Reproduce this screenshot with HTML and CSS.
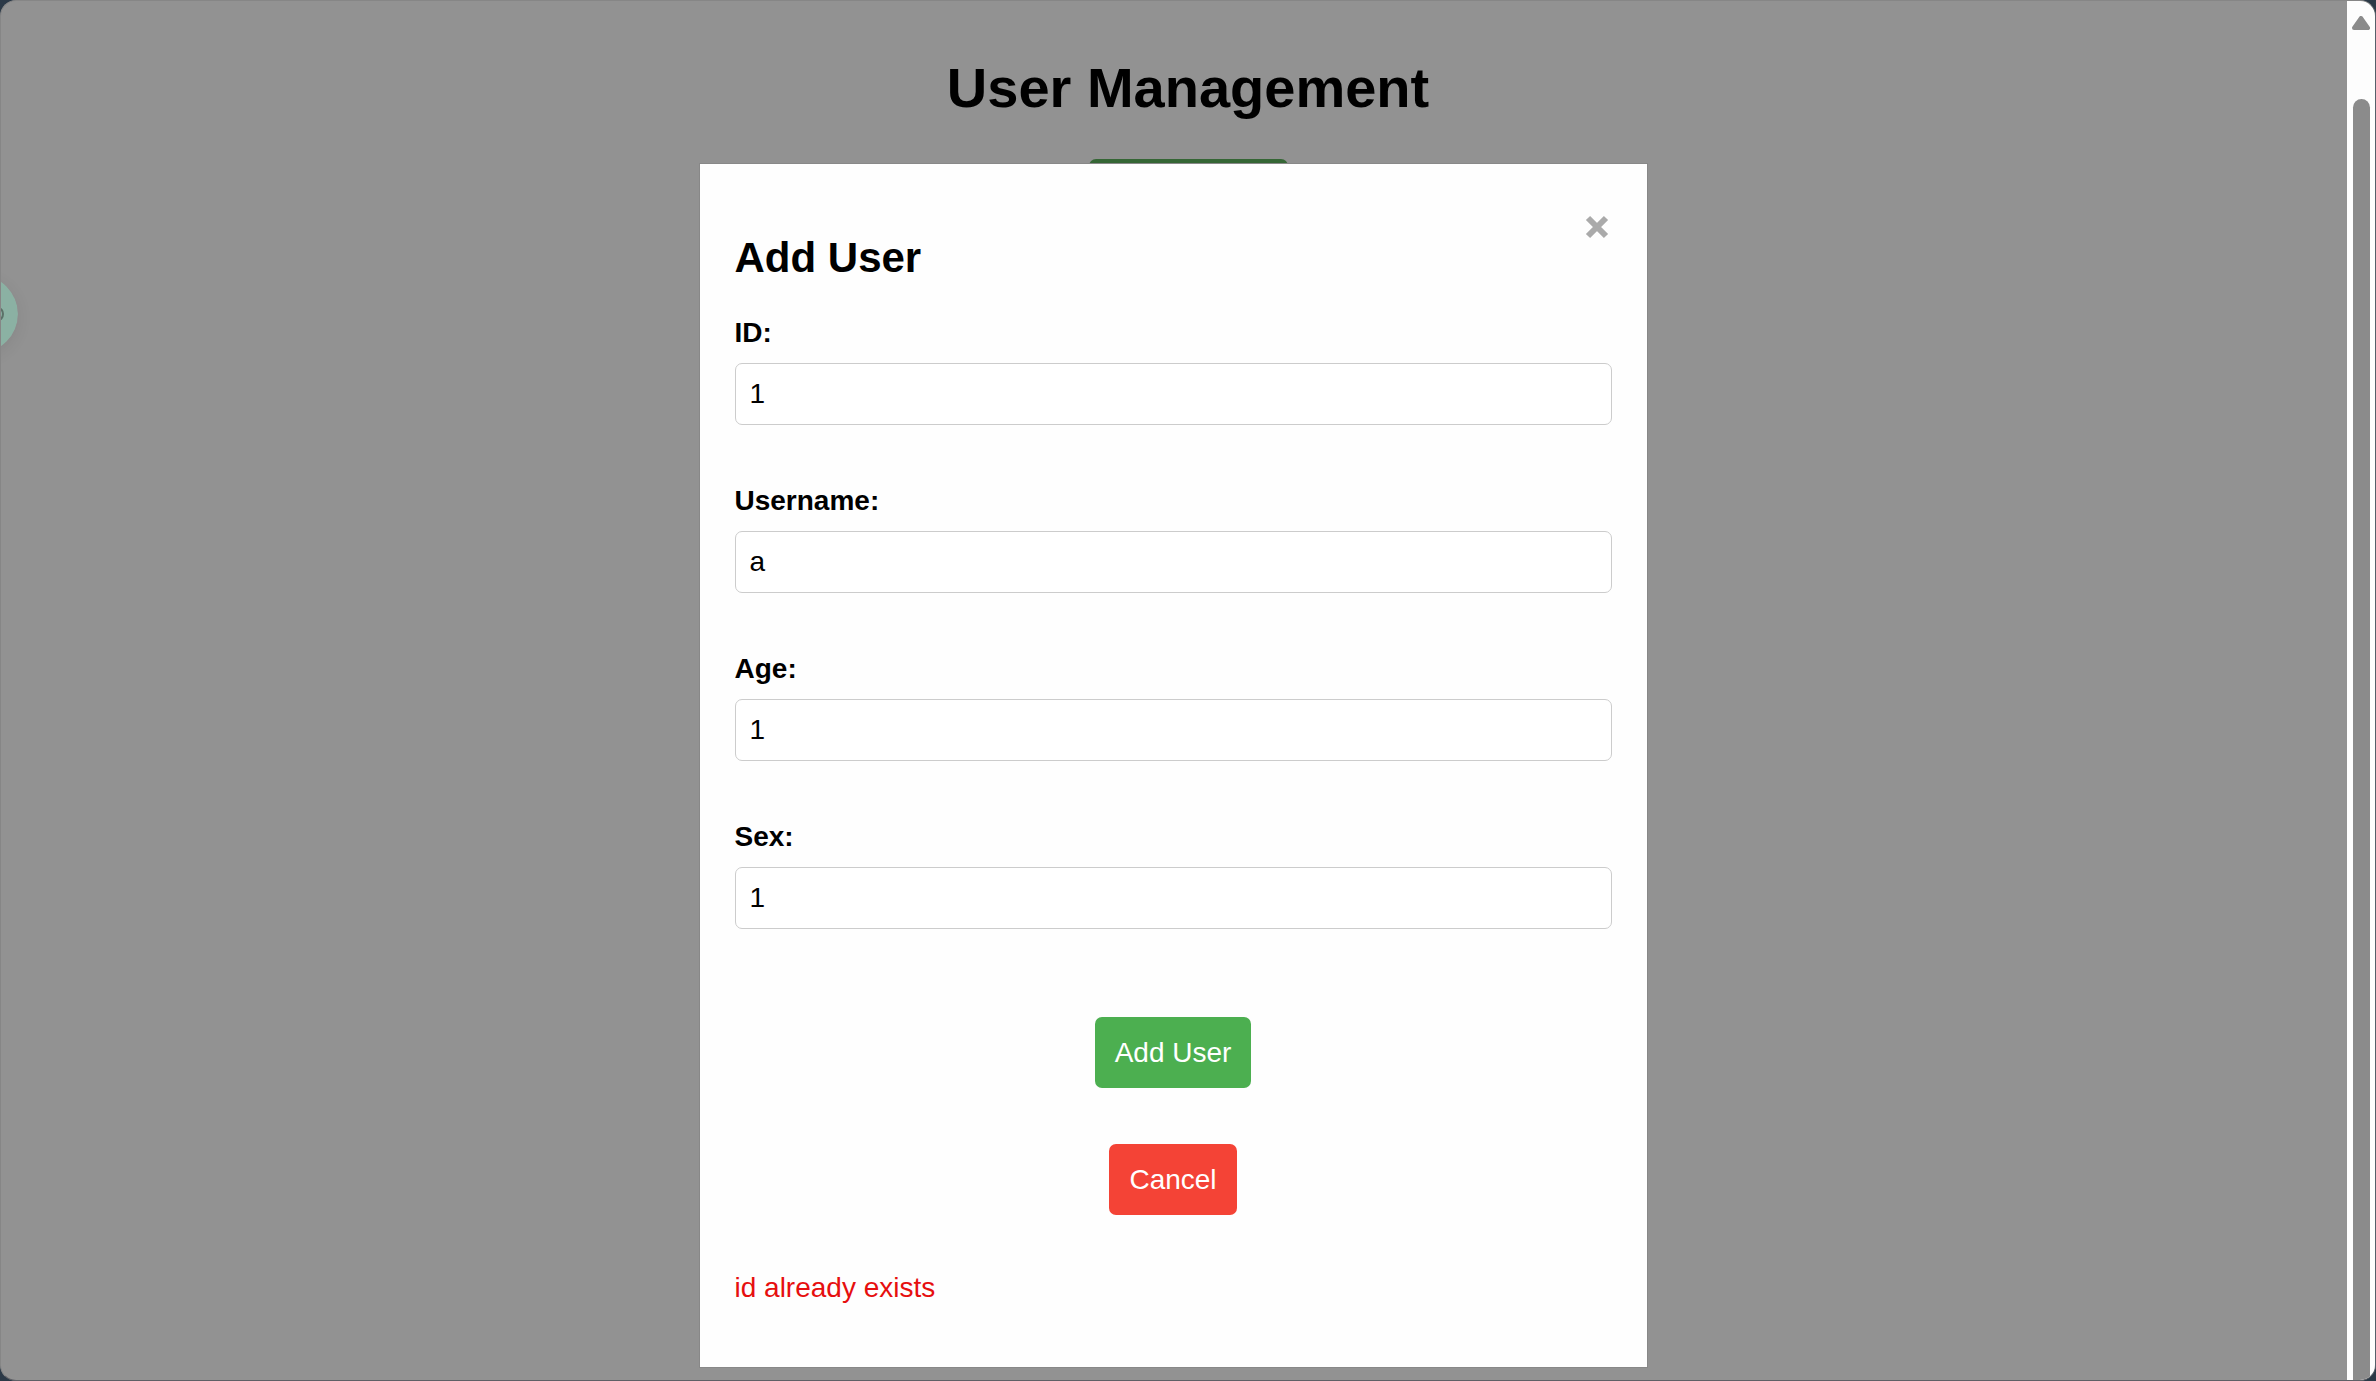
FILE: index.html
```html
<!DOCTYPE html>
<html lang="en">
<head>
<meta charset="utf-8">
<meta name="viewport" content="width=device-width, initial-scale=1">
<title>User Management</title>
<link rel="stylesheet" href="styles.css">
</head>
<body>
<div class="window">
  <main class="page">
    <h1 class="page-title">User Management</h1>
    <button class="create-button" type="button" aria-label="Create user"></button>
  </main>

  <svg class="bubble" viewBox="0 0 78 78" aria-hidden="true">
    <circle cx="39" cy="39" r="39" fill="#8bb1a3"/>
    <ellipse cx="58" cy="39" rx="5" ry="6" fill="none" stroke="#5c7168" stroke-width="2"/>
  </svg>

  <div class="overlay">
    <section class="modal" role="dialog" aria-modal="true" aria-labelledby="modal-title">
      <header class="modal-header">
        <h2 class="modal-title" id="modal-title">Add User</h2>
        <button class="close" type="button" aria-label="Close">
          <svg class="close-icon" viewBox="0 0 24 24" aria-hidden="true">
            <path d="M3 3 L21 21 M21 3 L3 21" fill="none" stroke="#aaa" stroke-width="6"/>
          </svg>
        </button>
      </header>
      <form class="form">
        <div class="field">
          <label class="label" for="id">ID:</label>
          <input class="input" id="id" type="text" value="1">
        </div>
        <div class="field">
          <label class="label" for="username">Username:</label>
          <input class="input" id="username" type="text" value="a">
        </div>
        <div class="field">
          <label class="label" for="age">Age:</label>
          <input class="input" id="age" type="text" value="1">
        </div>
        <div class="field">
          <label class="label" for="sex">Sex:</label>
          <input class="input" id="sex" type="text" value="1">
        </div>
        <div class="actions">
          <button class="button button-add" type="submit">Add User</button>
          <button class="button button-cancel" type="button">Cancel</button>
        </div>
      </form>
      <p class="error">id already exists</p>
    </section>
  </div>

  <div class="scrollbar" aria-hidden="true">
    <svg class="scroll-arrow" viewBox="0 0 18 14">
      <path d="M9 2 L16 12 H2 Z" fill="#8b8b8b" stroke="#8b8b8b" stroke-width="4" stroke-linejoin="round"/>
    </svg>
    <div class="scroll-thumb"></div>
  </div>
</div>
</body>
</html>
```

FILE: styles.css
```css
* {
  box-sizing: border-box;
}

body {
  margin: 0;
  background: #2b3947;
  font-family: "Liberation Sans", Arial, sans-serif;
  font-size: 28px;
  line-height: 32px;
  color: #000;
}

h1,
h2,
p {
  margin: 0;
}

.window {
  position: relative;
  height: 100vh;
  overflow: hidden;
  border: 1px solid #868686;
  border-right-color: #56606a;
  border-bottom-color: #5f6066;
  border-radius: 16px;
  background: #929292;
}

.page {
  display: flex;
  flex-direction: column;
  align-items: center;
  gap: 39px;
  padding-top: 55px;
}

.page-title {
  font-size: 56px;
  line-height: 64px;
}

.create-button {
  width: 199px;
  height: 72px;
  border: 0;
  border-radius: 7px;
  background: #356635;
}

.bubble {
  position: absolute;
  top: 274px;
  left: -61px;
  width: 78px;
  height: 78px;
  border-radius: 50%;
  box-shadow: 0 4px 16px rgba(0, 0, 0, 0.08);
}

.overlay {
  position: absolute;
  inset: 0 30px 0 0;
  padding-top: 162px;
}

.modal {
  width: 80%;
  max-width: 949px;
  margin: 0 auto;
  padding: 35px;
  border: 1px solid #888;
  background: #fefefe;
}

.modal-header {
  display: flex;
  justify-content: space-between;
  align-items: flex-start;
}

.modal-title {
  padding-top: 35px;
  font-size: 42px;
  line-height: 48px;
}

.close {
  padding: 16px 3px;
  border: 0;
  background: none;
}

.close-icon {
  display: block;
  width: 24px;
  height: 24px;
}

.form {
  display: flex;
  flex-direction: column;
  gap: 60px;
  margin-top: 35px;
}

.field {
  display: flex;
  flex-direction: column;
  gap: 14px;
}

.label {
  font-weight: bold;
}

.input {
  width: 100%;
  height: 62px;
  padding: 0 14px;
  border: 1px solid #ccc;
  border-radius: 7px;
  background: #fff;
  color: #000;
  font: inherit;
}

.actions {
  display: flex;
  flex-direction: column;
  align-items: center;
  gap: 56px;
  padding-top: 28px;
}

.button {
  height: 71px;
  padding: 0 20px;
  border: 0;
  border-radius: 7px;
  color: #fff;
  font: inherit;
}

.button-add {
  background: #4caf50;
}

.button-cancel {
  background: #f44336;
}

.error {
  padding: 57px 0 28px;
  color: #e60f0f;
}

.scrollbar {
  position: absolute;
  inset: 0 0 0 auto;
  display: flex;
  flex-direction: column;
  align-items: center;
  gap: 69px;
  width: 28px;
  padding-top: 15px;
  background: #fdfdfd;
}

.scroll-arrow {
  flex: none;
  width: 18px;
  height: 14px;
}

.scroll-thumb {
  flex: 1;
  width: 17px;
  border-radius: 9px 9px 0 0;
  background: #8b8b8b;
}
```
